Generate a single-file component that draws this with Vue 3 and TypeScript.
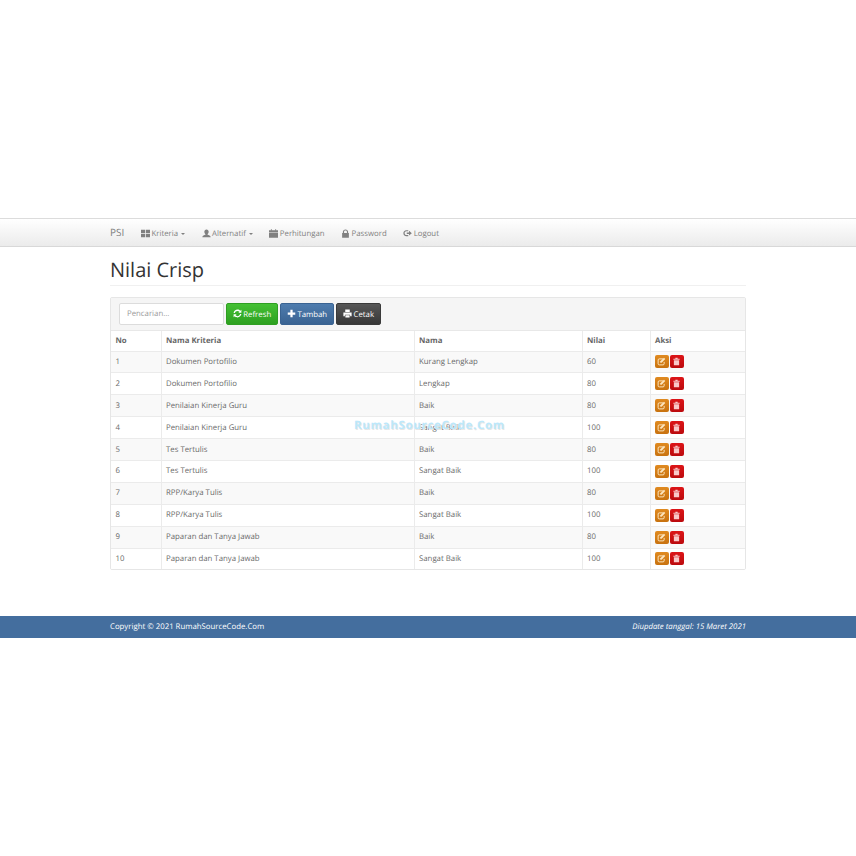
<script setup lang="ts">
interface Row { no: number; kriteria: string; nama: string; nilai: number }
const rows: Row[] = [
  { no: 1, kriteria: 'Dokumen Portofilio', nama: 'Kurang Lengkap', nilai: 60 },
  { no: 2, kriteria: 'Dokumen Portofilio', nama: 'Lengkap', nilai: 80 },
  { no: 3, kriteria: 'Penilaian Kinerja Guru', nama: 'Baik', nilai: 80 },
  { no: 4, kriteria: 'Penilaian Kinerja Guru', nama: 'Sangat Baik', nilai: 100 },
  { no: 5, kriteria: 'Tes Tertulis', nama: 'Baik', nilai: 80 },
  { no: 6, kriteria: 'Tes Tertulis', nama: 'Sangat Baik', nilai: 100 },
  { no: 7, kriteria: 'RPP/Karya Tulis', nama: 'Baik', nilai: 80 },
  { no: 8, kriteria: 'RPP/Karya Tulis', nama: 'Sangat Baik', nilai: 100 },
  { no: 9, kriteria: 'Paparan dan Tanya Jawab', nama: 'Baik', nilai: 80 },
  { no: 10, kriteria: 'Paparan dan Tanya Jawab', nama: 'Sangat Baik', nilai: 100 },
]
</script>

<template>
  <div class="page">
    <nav class="navbar">
      <div class="container nav-inner">
        <span class="brand">PSI</span>
        <span class="nav-item">
          <svg class="ico" viewBox="0 0 12 12"><path d="M0 1h5.500v4.500H0zM6.500 1H12v4.500H6.500zM0 6.500h5.500V11H0zM6.500 6.500H12V11H6.500z" /></svg>
          Kriteria <i class="caret"></i>
        </span>
        <span class="nav-item">
          <svg class="ico" viewBox="0 0 12 12"><path d="M6 .5c1.800 0 2.900 1.300 2.900 3.100 0 1.300-.6 2.500-1.400 3.100v1c1.500.5 3.800 1 4 2.800v.5H.5v-.5c.2-1.800 2.500-2.300 4-2.800v-1C3.700 6.100 3.100 4.900 3.100 3.600 3.100 1.800 4.200.5 6 .5z" /></svg>
          Alternatif <i class="caret"></i>
        </span>
        <span class="nav-item">
          <svg class="ico" viewBox="0 0 12 12"><path d="M0 1.500h12v2.500H0zM0 4.800h12V11.500H0z" /><path d="M2.500.3h1.300v2H2.500zM8.200.3h1.300v2H8.200z" /></svg>
          Perhitungan
        </span>
        <span class="nav-item">
          <svg class="ico" viewBox="0 0 12 12"><path fill-rule="evenodd" d="M1.500 5.200h1V3.800C2.500 1.800 4 .5 6 .5s3.500 1.300 3.500 3.300v1.400h1v6.300h-9zM4.100 5.200h3.800V3.800C7.900 2.700 7.100 2 6 2s-1.900.7-1.900 1.800z" /></svg>
          Password
        </span>
        <span class="nav-item">
          <svg class="ico" viewBox="0 0 12 12"><path d="M4.500 1.500H7v1.500H4.500C3.300 3 2.200 4 2.200 5.500S3.300 8 4.500 8H7v1.500H4.500C2 9.500.5 7.700.5 5.500S2 1.500 4.500 1.500z" /><path d="M5 4.500h3V2.300l3.800 3.200L8 8.700V6.500H5z" /></svg>
          Logout
        </span>
      </div>
    </nav>

    <main class="container content">
      <h1 class="title">Nilai Crisp</h1>
      <section class="panel">
        <div class="toolbar">
          <input class="search" type="text" placeholder="Pencarian..." />
          <button class="btn green" type="button">
            <svg class="ico" viewBox="0 0 12 12"><path d="M6 .8c1.500 0 2.800.6 3.700 1.600L11.200 1v4H7.200l1.400-1.400C8 2.900 7 2.500 6 2.500 4.300 2.500 2.900 3.600 2.500 5.200H.8C1.200 2.700 3.400.8 6 .8zM.8 7h4L3.400 8.400C4 9.100 5 9.500 6 9.500c1.700 0 3.100-1.100 3.500-2.700h1.700c-.4 2.500-2.600 4.400-5.200 4.400-1.500 0-2.800-.6-3.700-1.600L.8 11z" /></svg>
            Refresh
          </button>
          <button class="btn blue" type="button">
            <svg class="ico" viewBox="0 0 12 12"><path d="M4.500 1h3v3.500H11v3H7.500V11h-3V7.500H1v-3h3.500z" /></svg>
            Tambah
          </button>
          <button class="btn dark" type="button">
            <svg class="ico" viewBox="0 0 12 12"><path fill-rule="evenodd" d="M3 .8h6V4H3zM.5 4.800h11v4.700H9.500v-2h-7v2H.5zM3.200 8.300h5.600v3H3.200z" /></svg>
            Cetak
          </button>
        </div>
        <table class="grid">
          <colgroup>
            <col class="c1" /><col class="c2" /><col class="c3" /><col class="c4" /><col class="c5" />
          </colgroup>
          <thead>
            <tr><th>No</th><th>Nama Kriteria</th><th>Nama</th><th>Nilai</th><th>Aksi</th></tr>
          </thead>
          <tbody>
            <tr v-for="r in rows" :key="r.no">
              <td>{{ r.no }}</td>
              <td>{{ r.kriteria }}</td>
              <td>{{ r.nama }}</td>
              <td>{{ r.nilai }}</td>
              <td class="aksi">
                <span class="act orange">
                  <svg viewBox="0 0 12 12"><path fill="none" stroke="currentColor" stroke-width="1.300" d="M8 2.500H3A1.500 1.500 0 0 0 1.500 4v5A1.500 1.500 0 0 0 3 10.500h5A1.500 1.500 0 0 0 9.500 9V6.500" /><path fill="currentColor" d="M4.500 5.800 9.300 1 11 2.700 6.200 7.500 4.300 7.800z" /></svg>
                </span>
                <span class="act red">
                  <svg viewBox="0 0 12 12"><path fill="currentColor" d="M1.800 2.200h2.700V1h3v1.200h2.700v1.300H1.800zM2.500 4.300h7V11h-7z" /></svg>
                </span>
              </td>
            </tr>
          </tbody>
        </table>
      </section>
      <span class="watermark">RumahSourceCode.Com</span>
    </main>

    <footer class="footer">
      <div class="container foot-inner">
        <span>Copyright © 2021 RumahSourceCode.Com</span>
        <em>Diupdate tanggal: 15 Maret 2021</em>
      </div>
    </footer>
  </div>
</template>

<style>
html, body { background: #fff; }
</style>

<style scoped>
.page {
  height: 856px;
  padding-top: 218px;
  box-sizing: border-box;
  font-family: "Open Sans", sans-serif;
  font-size: 7.800px;
  color: #6a6a6a;
  overflow: hidden;
  text-rendering: geometricPrecision;
}
.container { width: 636px; margin: 0 auto; }
.navbar {
  height: 29px;
  box-sizing: border-box;
  background: linear-gradient(#fff, #ebebeb);
  border-top: 1px solid #dcdcdc;
  border-bottom: 1px solid #d8d8d8;
}
.nav-inner { display: flex; align-items: center; height: 29px; }
.brand { font-size: 10px; color: #808080; width: 31px; margin-top: -4px; }
.nav-item {
  display: flex;
  align-items: center;
  gap: 1.500px;
  color: #808080;
  margin-right: 16.500px;
  white-space: nowrap;
}
.ico { width: 9px; height: 9px; fill: currentColor; flex: none; }
.caret {
  width: 0;
  height: 0;
  margin-left: 1.500px;
  border-left: 2px solid transparent;
  border-right: 2px solid transparent;
  border-top: 2px solid #808080;
}
.content { position: relative; }
.title {
  margin: 0 0 11px;
  height: 39px;
  box-sizing: border-box;
  padding-top: 9px;
  font-size: 20px;
  line-height: 27px;
  font-weight: 400;
  color: #333;
  border-bottom: 1px solid #f0f0f0;
}
.panel {
  border: 1px solid #e6e6e6;
  border-radius: 2px;
  overflow: hidden;
}
.toolbar {
  display: flex;
  align-items: center;
  gap: 2px;
  height: 33px;
  box-sizing: border-box;
  padding: 0 8px;
  background: #f5f5f5;
  border-bottom: 1px solid #e8e8e8;
}
.search {
  width: 105px;
  height: 22px;
  box-sizing: border-box;
  padding: 0 7px;
  border: 1px solid #dcdcdc;
  border-radius: 2px;
  background: #fff;
  font: 7.800px "Open Sans", sans-serif;
  text-rendering: geometricPrecision;
  outline: none;
}
.search::placeholder { color: #999; }
.btn {
  display: flex;
  align-items: center;
  justify-content: center;
  gap: 1.500px;
  height: 22px;
  padding: 1px 0 0;
  border-radius: 2px;
  color: #fff;
  font: 7.800px "Open Sans", sans-serif;
  text-rendering: geometricPrecision;
}
.btn .ico { margin-top: -2px; }
.green { width: 52px; background: linear-gradient(#44c033, #2da020); border: 1px solid #2f9e22; }
.blue { width: 54px; background: linear-gradient(#4e7cae, #3a6392); border: 1px solid #3a6392; }
.dark { width: 45px; background: linear-gradient(#575757, #373737); border: 1px solid #3a3a3a; }
.grid {
  width: 100%;
  table-layout: fixed;
  border-collapse: collapse;
  background: #fff;
}
.c1 { width: 50px; }
.c2 { width: 253px; }
.c3 { width: 168px; }
.c4 { width: 68px; }
th, td {
  text-align: left;
  padding: 0 4.500px;
  border: 1px solid #ebebeb;
  font-weight: 400;
}
tr > :first-child { border-left: 0; }
tr > :last-child { border-right: 0; }
tbody tr:last-child td { border-bottom: 0; }
thead tr:first-child th { border-top: 0; }
th { height: 19.500px; font-weight: 700; color: #666; }
td { height: 20.900px; }
tbody tr:nth-child(odd) { background: #f9f9f9; }
.aksi { line-height: 0; padding-left: 4px; }
.act {
  display: inline-flex;
  align-items: center;
  justify-content: center;
  width: 14px;
  height: 13px;
  margin-right: 1px;
  border-radius: 2px;
  vertical-align: middle;
}
.act svg { width: 9px; height: 9px; }
.orange { background: linear-gradient(#e08a20, #c8720f); color: #fde6c0; }
.red { background: linear-gradient(#dd1518, #bb0a0d); color: #f9c8c8; }
.watermark {
  position: absolute;
  left: 244px;
  top: 171px;
  font-size: 11.500px;
  font-weight: 700;
  letter-spacing: .7px;
  color: #bce8fb;
  text-shadow: 1px 1px 0 #e6e6e6;
  white-space: nowrap;
}
.footer {
  margin-top: 46px;
  height: 22px;
  background: #446e9e;
  color: #fff;
}
.foot-inner {
  display: flex;
  align-items: center;
  justify-content: space-between;
  height: 100%;
}
</style>
